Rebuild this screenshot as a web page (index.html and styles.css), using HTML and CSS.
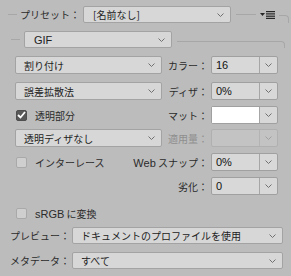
FILE: index.html
```html
<!DOCTYPE html>
<html>
  <head>
    <title>GIF 書き出し設定</title>
    <link rel="stylesheet" href="styles.css">
  </head>
  <body>
    <div class="panel">
      <div class="row head">
        <span class="rule lead"></span>
        <span class="label preset-label">プリセット：</span>
        <div class="select preset">
          <span>[名前なし]</span>
          <svg class="chev" width="7" height="4" viewBox="0 0 7 4"><polyline points="0.5,0.5 3.5,3.5 6.5,0.5" /></svg>
        </div>
        <span class="rule mid"></span>
        <svg class="menu-icon" width="15" height="8" viewBox="0 0 15 8">
          <polygon points="0,2 5,2 2.5,5" />
          <rect x="6" y="0" width="9" height="1.2" />
          <rect x="6" y="2.3" width="9" height="1.2" />
          <rect x="6" y="4.6" width="9" height="1.2" />
          <rect x="6" y="6.8" width="9" height="1.2" />
        </svg>
        <span class="rule tail corner"></span>
      </div>

      <div class="row fmt">
        <span class="rule lead2"></span>
        <div class="select gif">
          <span class="latin">GIF</span>
          <svg class="chev" width="7" height="4" viewBox="0 0 7 4"><polyline points="0.5,0.5 3.5,3.5 6.5,0.5" /></svg>
        </div>
        <span class="rule fill corner"></span>
      </div>

      <div class="opt r1">
        <div class="select left">
          <span>割り付け</span>
          <svg class="chev" width="7" height="4" viewBox="0 0 7 4"><polyline points="0.5,0.5 3.5,3.5 6.5,0.5" /></svg>
        </div>
        <span class="label side">カラー：</span>
        <div class="combo">
          <span class="field latin">16</span>
          <span class="btn"><svg class="chev" width="7" height="4" viewBox="0 0 7 4"><polyline points="0.5,0.5 3.5,3.5 6.5,0.5" /></svg></span>
        </div>
      </div>

      <div class="opt r2">
        <div class="select left">
          <span>誤差拡散法</span>
          <svg class="chev" width="7" height="4" viewBox="0 0 7 4"><polyline points="0.5,0.5 3.5,3.5 6.5,0.5" /></svg>
        </div>
        <span class="label side">ディザ：</span>
        <div class="combo">
          <span class="field latin">0%</span>
          <span class="btn"><svg class="chev" width="7" height="4" viewBox="0 0 7 4"><polyline points="0.5,0.5 3.5,3.5 6.5,0.5" /></svg></span>
        </div>
      </div>

      <div class="opt r3">
        <span class="check on"><svg width="9" height="8" viewBox="0 0 9 8"><polyline points="1,4 3.5,6.5 8,1" /></svg></span>
        <span class="check-text">透明部分</span>
        <span class="label side">マット：</span>
        <div class="combo">
          <span class="field swatch"></span>
          <span class="btn"><svg class="chev" width="7" height="4" viewBox="0 0 7 4"><polyline points="0.5,0.5 3.5,3.5 6.5,0.5" /></svg></span>
        </div>
      </div>

      <div class="opt r4">
        <div class="select left">
          <span>透明ディザなし</span>
          <svg class="chev" width="7" height="4" viewBox="0 0 7 4"><polyline points="0.5,0.5 3.5,3.5 6.5,0.5" /></svg>
        </div>
        <span class="label side disabled">適用量：</span>
        <div class="combo off">
          <span class="field"></span>
          <span class="btn"><svg class="chev" width="7" height="4" viewBox="0 0 7 4"><polyline points="0.5,0.5 3.5,3.5 6.5,0.5" /></svg></span>
        </div>
      </div>

      <div class="opt r5">
        <span class="check"></span>
        <span class="check-text">インターレース</span>
        <span class="label side"><span class="latin">Web</span> スナップ：</span>
        <div class="combo">
          <span class="field latin">0%</span>
          <span class="btn"><svg class="chev" width="7" height="4" viewBox="0 0 7 4"><polyline points="0.5,0.5 3.5,3.5 6.5,0.5" /></svg></span>
        </div>
      </div>

      <div class="opt r6">
        <span class="label side">劣化：</span>
        <div class="combo">
          <span class="field latin">0</span>
          <span class="btn"><svg class="chev" width="7" height="4" viewBox="0 0 7 4"><polyline points="0.5,0.5 3.5,3.5 6.5,0.5" /></svg></span>
        </div>
      </div>

      <div class="opt srgb">
        <span class="check"></span>
        <span class="check-text"><span class="latin">sRGB</span> に変換</span>
      </div>

      <div class="wide preview">
        <span class="label wide-label">プレビュー：</span>
        <div class="select grow">
          <span>ドキュメントのプロファイルを使用</span>
          <svg class="chev" width="7" height="4" viewBox="0 0 7 4"><polyline points="0.5,0.5 3.5,3.5 6.5,0.5" /></svg>
        </div>
      </div>

      <div class="wide meta">
        <span class="label wide-label">メタデータ：</span>
        <div class="select grow">
          <span>すべて</span>
          <svg class="chev" width="7" height="4" viewBox="0 0 7 4"><polyline points="0.5,0.5 3.5,3.5 6.5,0.5" /></svg>
        </div>
      </div>
    </div>
  </body>
</html>
```

FILE: styles.css
```css
html,
body {
  margin: 0;
  background: #bcbcbc;
}
body {
  font-family: "Noto Sans CJK JP", "Liberation Sans", sans-serif;
  font-size: 10px;
  color: #2b2b2b;
  width: 291px;
  height: 276px;
  overflow: hidden;
}
.panel {
  padding-top: 6px;
}
.latin {
  font-family: "Liberation Sans", Arial, sans-serif;
  font-size: 11px;
}
.row {
  display: flex;
  align-items: center;
  height: 17px;
}
.fmt {
  margin-top: 8px;
}
.rule {
  height: 1px;
  background: #a7a7a7;
}
.lead {
  width: 9px;
  margin: 0 3px 0 8px;
}
.lead2 {
  width: 9px;
  margin: 0 4px 0 11px;
}
.mid {
  width: 20px;
  margin-left: 5px;
}
.tail {
  width: 10px;
  margin-left: 4px;
}
.fill {
  flex: 1;
  margin: 0 6px 0 5px;
}
.corner {
  align-self: flex-end;
  height: 7px;
  background: none;
  border-top: 1px solid #a7a7a7;
  border-right: 1px solid #a7a7a7;
  border-top-right-radius: 4px;
  box-sizing: border-box;
}
.head .corner {
  height: 8px;
}
.menu-icon {
  margin-left: 4px;
  fill: #262626;
}
.label {
  white-space: nowrap;
}
.preset-label {
  width: 63px;
}
.select {
  display: flex;
  align-items: center;
  justify-content: space-between;
  box-sizing: border-box;
  height: 17px;
  padding: 0 6px 0 8px;
  background: #d7d7d7;
  border: 1px solid #a3a3a3;
  border-radius: 2px;
  color: #222;
}
.preset {
  width: 148px;
  padding-left: 9px;
}
.gif {
  width: 148px;
  padding-left: 9px;
}
.chev {
  fill: none;
  stroke: #707070;
  stroke-width: 1;
}
.opt {
  display: flex;
  align-items: center;
  height: 18px;
  margin-top: 6px;
  padding: 0 13px 0 15px;
}
.r1,
.r2 {
  margin-top: 8px;
}
.r4 {
  margin-top: 5px;
}
.srgb {
  margin-top: 9px;
}
.left {
  width: 147px;
  height: 18px;
}
.side {
  margin-left: auto;
  margin-right: 3px;
}
.disabled {
  color: #8e8e8e;
}
.combo {
  display: flex;
  box-sizing: border-box;
  width: 67px;
  height: 18px;
  background: #d8d8d8;
  border: 1px solid #a0a0a0;
  border-radius: 2px;
}
.combo .field {
  flex: 1;
  display: flex;
  align-items: center;
  padding-left: 4px;
  border-right: 1px solid #a6a6a6;
  color: #111;
}
.combo .swatch {
  background: #fff;
}
.combo .btn {
  width: 17px;
  display: flex;
  align-items: center;
  justify-content: center;
}
.combo.off {
  background: #c3c3c3;
  border-color: #b0b0b0;
}
.combo.off .field {
  border-right-color: #b3b3b3;
}
.combo.off .chev {
  stroke: #a0a0a0;
}
.check {
  display: flex;
  align-items: center;
  justify-content: center;
  box-sizing: border-box;
  width: 11px;
  height: 11px;
  margin-left: 1px;
  background: #cfcfcf;
  border: 1px solid #a9a9a9;
  border-radius: 2px;
}
.check.on {
  background: #585858;
  border-color: #4e4e4e;
}
.check svg {
  fill: none;
  stroke: #fff;
  stroke-width: 1.8;
}
.check-text {
  margin-left: 8px;
}
.wide {
  display: flex;
  align-items: center;
  height: 17px;
  padding: 0 8px 0 10px;
}
.preview {
  margin-top: 5px;
}
.meta {
  margin-top: 8px;
}
.wide-label {
  width: 62px;
}
.grow {
  flex: 1;
}
```
